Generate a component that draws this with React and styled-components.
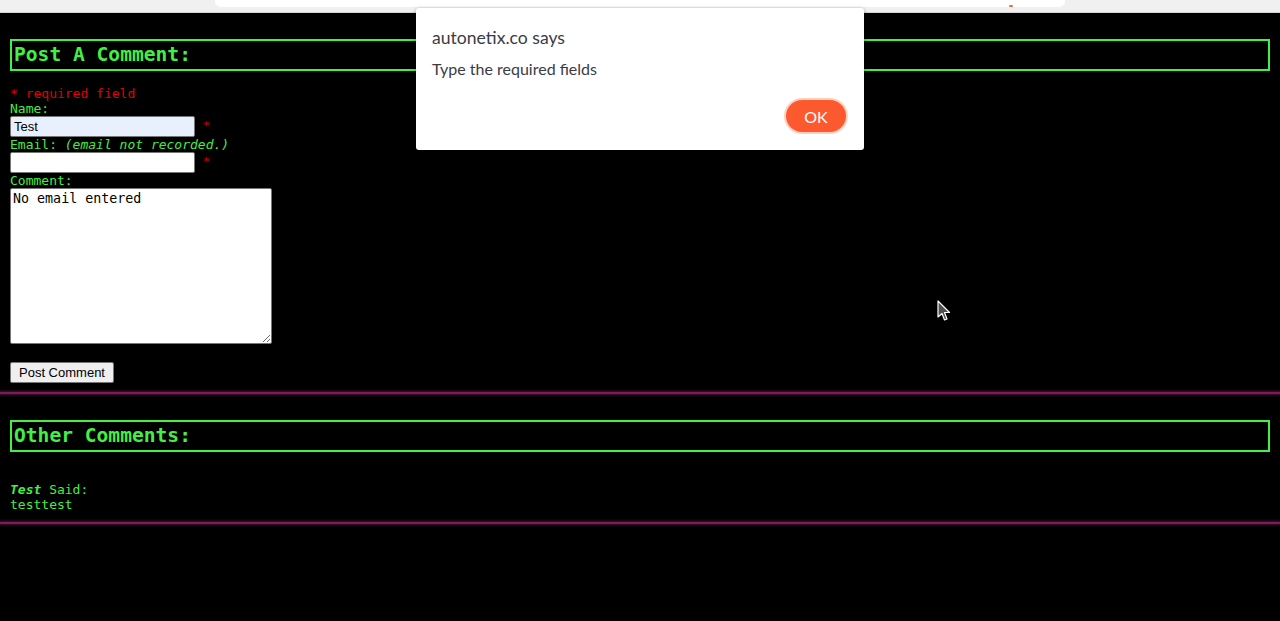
import React from "react";
import styled, { createGlobalStyle } from "styled-components";

const GlobalStyle = createGlobalStyle`
  html, body {
    margin: 0;
    padding: 0;
    background: #000;
  }
  body {
    font-family: "DejaVu Sans Mono", "Liberation Mono", monospace;
    font-size: 13px;
    color: #44ee44;
    overflow: hidden;
  }
`;

const Screen = styled.div`
  position: relative;
  width: 1280px;
  height: 621px;
  background: #000;
`;

const ChromeStrip = styled.div`
  height: 12px;
  background: #f0f0f0;
  border-bottom: 1px solid #d4d4d4;
  display: flex;
  justify-content: center;
`;

const ChromeBar = styled.div`
  width: 850px;
  height: 7px;
  background: #fff;
  border-radius: 0 0 6px 6px;
  display: flex;
  align-items: flex-end;
  justify-content: flex-end;
  padding-right: 52px;
  box-sizing: border-box;
`;

const ChromeMark = styled.span`
  width: 4px;
  height: 2px;
  background: #f26b2a;
  border-radius: 1px;
`;

const Content = styled.main`
  padding: 26px 10px 0;
`;

const SectionTitle = styled.h2`
  margin: 0;
  border: 2px solid #44ee44;
  padding: 2px 2px;
  box-sizing: border-box;
  height: 32px;
  font-family: "DejaVu Sans Mono", monospace;
  font-size: 19.6px;
  line-height: 23px;
  font-weight: bold;
  color: #44ee44;
`;

const Form = styled.form`
  margin-top: 15px;
  display: flex;
  flex-direction: column;
  align-items: flex-start;
`;

const Line = styled.div`
  line-height: 15px;
  color: ${({ $red }) => ($red ? "#e00000" : "#44ee44")};
`;

const Note = styled.em`
  font-style: italic;
`;

const FieldRow = styled.div`
  display: flex;
  align-items: flex-start;
  gap: 8px;
`;

const TextInput = styled.input`
  width: 185px;
  height: 21px;
  box-sizing: border-box;
  border: 1px solid #767676;
  border-radius: 2px;
  padding: 1px 3px;
  font-family: "Liberation Sans", Arial, sans-serif;
  font-size: 13px;
  color: #000;
  background: ${({ $filled }) => ($filled ? "#e8f0fe" : "#fff")};
  outline: none;
`;

const Star = styled.span`
  color: #e00000;
  font-size: 11px;
  line-height: 11px;
  margin-top: 4px;
`;

const CommentBox = styled.textarea`
  width: 262px;
  height: 156px;
  box-sizing: border-box;
  border: 1px solid #767676;
  border-radius: 2px;
  padding: 2px;
  font-family: "DejaVu Sans Mono", monospace;
  font-size: 13.33px;
  line-height: 15px;
  color: #000;
  background: #fff;
  resize: both;
  outline: none;
`;

const SubmitButton = styled.button`
  margin-top: 18px;
  height: 21px;
  padding: 1px 8px;
  border: 1px solid #767676;
  border-radius: 2px;
  background: #efefef;
  font-family: "Liberation Sans", Arial, sans-serif;
  font-size: 13px;
  color: #000;
`;

const Rule = styled.hr`
  margin: ${({ $top }) => $top}px -10px 0;
  border: none;
  height: 2px;
  background: #7a1f55;
  box-shadow: 0 0 3px 1px rgba(120, 25, 85, 0.65);
`;

const OtherSection = styled.section`
  margin-top: 26px;
`;

const CommentItem = styled.div`
  margin-top: 30px;
  line-height: 15px;
`;

const Author = styled.strong`
  font-style: italic;
  font-weight: bold;
`;

const Dialog = styled.div`
  position: absolute;
  left: 416px;
  top: 8px;
  width: 448px;
  height: 142px;
  box-sizing: border-box;
  background: #fff;
  border-radius: 3px;
  box-shadow: 0 1px 4px rgba(0, 0, 0, 0.35);
  padding: 19px 16px 16px;
  display: flex;
  flex-direction: column;
  font-family: "Lato", "Open Sans", sans-serif;
  color: #3b3b45;
`;

const DialogTitle = styled.div`
  font-size: 17.6px;
  line-height: 22px;
`;

const DialogText = styled.div`
  margin-top: 10px;
  font-size: 16px;
  line-height: 20px;
`;

const DialogActions = styled.div`
  margin-top: auto;
  display: flex;
  justify-content: flex-end;
`;

const OkButton = styled.button`
  width: 60px;
  height: 32px;
  border-radius: 16px;
  border: none;
  background: #fc5a2e;
  box-shadow: 0 0 0 2px #ffd0c2;
  color: #fff;
  font-family: "Lato", "Open Sans", sans-serif;
  font-size: 16px;
  margin-right: 2px;
  margin-bottom: 2px;
`;

const Pointer = styled.svg`
  position: absolute;
  left: 937px;
  top: 300px;
`;

export default function App() {
  return (
    <Screen>
      <GlobalStyle />
      <ChromeStrip>
        <ChromeBar>
          <ChromeMark />
        </ChromeBar>
      </ChromeStrip>
      <Content>
        <SectionTitle>Post A Comment:</SectionTitle>
        <Form onSubmit={(e) => e.preventDefault()}>
          <Line $red>* required field</Line>
          <Line>Name:</Line>
          <FieldRow>
            <TextInput $filled defaultValue="Test" />
            <Star>*</Star>
          </FieldRow>
          <Line>
            Email: <Note>(email not recorded.)</Note>
          </Line>
          <FieldRow>
            <TextInput defaultValue="" />
            <Star>*</Star>
          </FieldRow>
          <Line>Comment:</Line>
          <CommentBox defaultValue="No email entered" />
          <SubmitButton type="submit">Post Comment</SubmitButton>
        </Form>
        <Rule $top={9} />
        <OtherSection>
          <SectionTitle>Other Comments:</SectionTitle>
          <CommentItem>
            <Author>Test</Author> Said:
            <br />
            testtest
          </CommentItem>
        </OtherSection>
        <Rule $top={10} />
      </Content>
      <Dialog>
        <DialogTitle>autonetix.co says</DialogTitle>
        <DialogText>Type the required fields</DialogText>
        <DialogActions>
          <OkButton>OK</OkButton>
        </DialogActions>
      </Dialog>
      <Pointer width="14" height="22" viewBox="0 0 14 22">
        <path d="M1 1 L1 17 L5 13.5 L7.5 20 L10 19 L7.5 12.5 L12.5 12.5 Z" fill="#505050" stroke="#fff" strokeWidth="1.2" strokeLinejoin="round" />
      </Pointer>
    </Screen>
  );
}
